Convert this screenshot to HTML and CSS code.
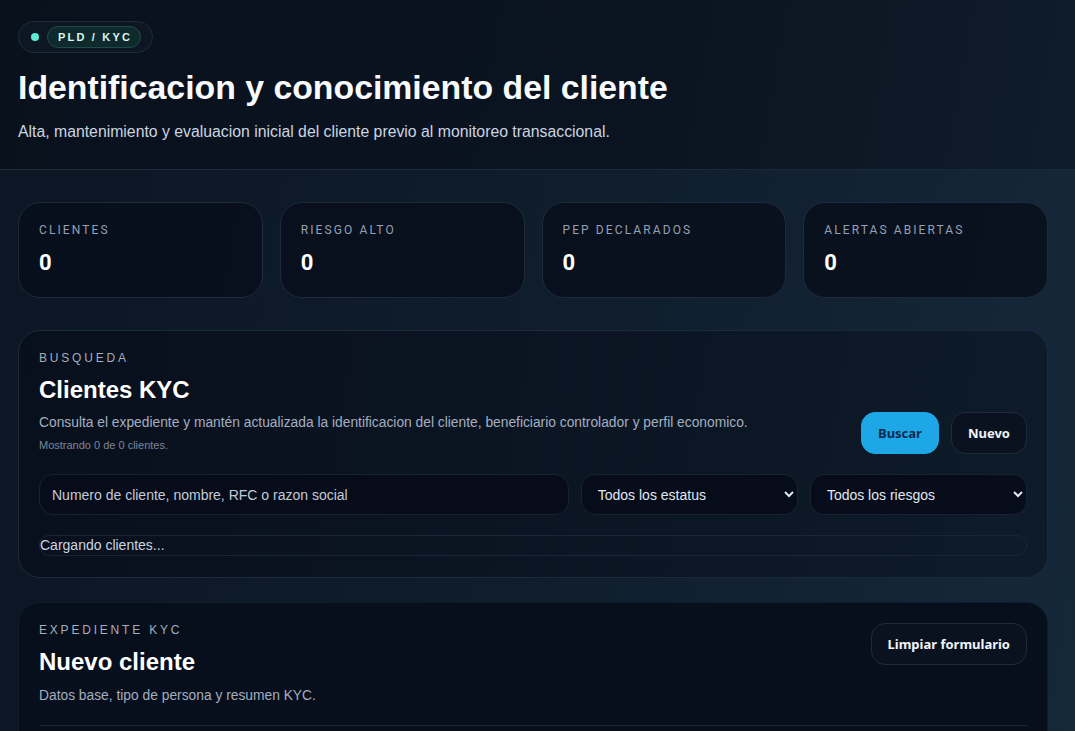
FILE: index.html
```html
<!DOCTYPE html>
<html lang="es">
<head>
  <meta charset="UTF-8">
  <title>Identificacion y conocimiento del cliente</title>
  <link rel="stylesheet" href="styles.css">
</head>
<body>
  <header class="hero">
    <div class="pill">
      <span class="pill-dot"></span>
      <span class="pill-tag">PLD / KYC</span>
    </div>
    <h1>Identificacion y conocimiento del cliente</h1>
    <p class="hero-sub">Alta, mantenimiento y evaluacion inicial del cliente previo al monitoreo transaccional.</p>
  </header>

  <main class="content">
    <section class="stats">
      <div class="stat">
        <span class="stat-label">Clientes</span>
        <strong class="stat-value" id="statClientes">0</strong>
      </div>
      <div class="stat">
        <span class="stat-label">Riesgo alto</span>
        <strong class="stat-value" id="statRiesgo">0</strong>
      </div>
      <div class="stat">
        <span class="stat-label">PEP declarados</span>
        <strong class="stat-value" id="statPep">0</strong>
      </div>
      <div class="stat">
        <span class="stat-label">Alertas abiertas</span>
        <strong class="stat-value" id="statAlertas">0</strong>
      </div>
    </section>

    <section class="panel">
      <div class="eyebrow">Busqueda</div>
      <div class="panel-head">
        <div>
          <h2>Clientes KYC</h2>
          <p class="panel-desc">Consulta el expediente y mantén actualizada la identificacion del cliente, beneficiario controlador y perfil economico.</p>
          <p class="panel-count" id="contador">Mostrando 0 de 0 clientes.</p>
        </div>
        <div class="actions">
          <button class="btn btn-primary" type="button">Buscar</button>
          <button class="btn" type="button">Nuevo</button>
        </div>
      </div>
      <div class="filters">
        <input type="text" placeholder="Numero de cliente, nombre, RFC o razon social">
        <select>
          <option>Todos los estatus</option>
          <option>Activo</option>
          <option>Inactivo</option>
        </select>
        <select>
          <option>Todos los riesgos</option>
          <option>Bajo</option>
          <option>Medio</option>
          <option>Alto</option>
        </select>
      </div>
      <div class="results">Cargando clientes...</div>
    </section>

    <section class="panel panel-form">
      <div class="panel-head">
        <div>
          <div class="eyebrow">Expediente KYC</div>
          <h2>Nuevo cliente</h2>
          <p class="panel-desc">Datos base, tipo de persona y resumen KYC.</p>
        </div>
        <button class="btn" type="button">Limpiar formulario</button>
      </div>
      <hr class="divider">
    </section>
  </main>
</body>
</html>
```

FILE: styles.css
```css
* {
  box-sizing: border-box;
}

html, body {
  margin: 0;
  min-height: 100%;
}

body {
  font-family: "Liberation Sans", Arial, sans-serif;
  color: #e2e8f0;
  background: linear-gradient(100deg, #0c1624 0%, #0f1d2c 50%, #15283a 100%);
}

/* cabecera */
.hero {
  padding: 21px 18px 28px;
  background: linear-gradient(100deg, #09111d 0%, #0a1320 55%, #0f1c2a 100%);
  border-bottom: 1px solid #1c2a3a;
}

.pill {
  display: inline-flex;
  align-items: center;
  gap: 8px;
  padding: 4px 11px 4px 12px;
  border: 1px solid #1e2c3a;
  border-radius: 999px;
  background: #0c1723;
}

.pill-dot {
  width: 8px;
  height: 8px;
  border-radius: 50%;
  background: #5eead4;
}

.pill-tag {
  padding: 4px 8px 4px 10px;
  border: 1px solid #1f4a4a;
  border-radius: 999px;
  background: #0f2a2d;
  color: #d9f7ef;
  font-size: 11px;
  font-weight: bold;
  letter-spacing: 2.2px;
}

.hero h1 {
  margin: 14px 0 0;
  font-size: 33.8px;
  line-height: 40px;
  color: #f8fafc;
}

.hero-sub {
  margin: 16px 0 0;
  font-size: 15.8px;
  color: #cbd5e1;
}

.content {
  padding: 32px 27px 0 18px;
}

/* tarjetas de resumen */
.stats {
  display: grid;
  grid-template-columns: repeat(4, 1fr);
  gap: 17px;
}

.stat {
  height: 96px;
  padding: 20px 20px;
  border: 1px solid #1e2a3a;
  border-radius: 22px;
  background: rgba(8, 14, 27, 0.85);
}

.stat-label {
  display: block;
  font-family: Roboto, "Liberation Sans", sans-serif;
  font-size: 12px;
  letter-spacing: 2.1px;
  text-transform: uppercase;
  color: #94a0b3;
}

.stat-value {
  display: block;
  margin-top: 13px;
  font-family: Roboto, "Liberation Sans", sans-serif;
  font-size: 22px;
  color: #ffffff;
}

/* paneles */
.panel {
  margin-top: 32px;
  padding: 20px 20px 21px;
  border: 1px solid #1c2a3a;
  border-radius: 22px;
  background: linear-gradient(100deg, rgba(8, 14, 27, 0.85), rgba(12, 24, 38, 0.8));
}

.panel-form {
  margin-top: 24px;
  background: #070e1c;
  border-color: #101b2a;
  border-bottom-left-radius: 0;
  border-bottom-right-radius: 0;
}

.eyebrow {
  font-size: 12px;
  letter-spacing: 2.8px;
  text-transform: uppercase;
  color: #a3aebf;
}

.panel h2 {
  margin: 10px 0 0;
  font-size: 24px;
  line-height: 30px;
  color: #ffffff;
}

.panel-head {
  display: flex;
  justify-content: space-between;
  align-items: flex-end;
  gap: 20px;
}

.panel-form .panel-head {
  align-items: flex-start;
}

.panel-desc {
  margin: 10px 0 0;
  font-size: 13.8px;
  color: #a3afc0;
}

.panel-count {
  margin: 9px 0 0;
  font-size: 11px;
  color: #7b8799;
}

.panel-form .panel-desc {
  margin-top: 11px;
}

.actions {
  display: flex;
  gap: 12px;
  margin-bottom: -3px;
}

.btn {
  height: 42px;
  padding: 0 16px;
  border: 1px solid #1f2b3b;
  border-radius: 14px;
  background: #0a1220;
  color: #f1f5f9;
  font-family: "Noto Sans", sans-serif;
  font-size: 13px;
  font-weight: bold;
  white-space: nowrap;
}

.btn-primary {
  border-color: #1ea7e6;
  background: #1ea7e6;
  color: #0b2a4d;
}

.filters {
  display: grid;
  grid-template-columns: 2.44fr 1fr 1fr;
  gap: 12px;
  margin-top: 23px;
}

.filters input,
.filters select {
  height: 41px;
  padding: 0 12px;
  border: 1px solid #172233;
  border-radius: 14px;
  background: #060c19;
  color: #e2e8f0;
  font-family: "Liberation Sans", Arial, sans-serif;
  font-size: 14px;
}

.filters input::placeholder {
  color: #c3cad6;
}

.results {
  margin-top: 20px;
  padding: 1px 0 2px;
  border: 1px solid #1a2636;
  border-radius: 10px;
  font-size: 14px;
  color: #cbd5e1;
}

.divider {
  margin: 22px 0 0;
  border: 0;
  border-top: 1px solid #1c2736;
}
```
